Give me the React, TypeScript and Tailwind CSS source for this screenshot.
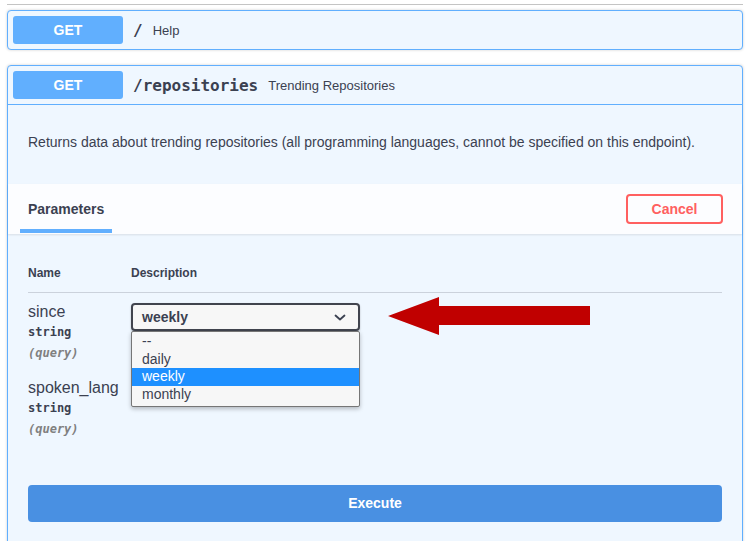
import React from "react";

const sans = "font-['Liberation_Sans',Arial,sans-serif]";
const mono = "font-['DejaVu_Sans_Mono',monospace]";

const MethodBadge = () => (
  <div className="w-[110px] h-[28px] rounded-[3px] bg-[#61affe] flex items-center justify-center text-white text-[14px] font-bold">
    GET
  </div>
);

const ParamRow = ({ name, children }: { name: string; children?: React.ReactNode }) => (
  <div className="flex h-[76px] pt-[8px]">
    <div className="w-[103px] shrink-0">
      <div className="text-[16px] leading-[21px]">{name}</div>
      <div className={`${mono} text-[12px] leading-[21px] font-bold`}>string</div>
      <div className={`${mono} text-[12px] leading-[20px] font-bold italic text-[#808080]`}>(query)</div>
    </div>
    <div className="flex-1">{children}</div>
  </div>
);

const options = ["--", "daily", "weekly", "monthly"];

export default function App() {
  return (
    <div className={`${sans} relative w-[748px] h-[541px] overflow-hidden bg-white text-[#3b4151]`}>
      <div className="ml-[7px] w-[736px] pt-[4px]">
        <div className="h-px bg-[#c4c4c4]" />

        {/* GET / */}
        <div className="mt-[5px] rounded-[4px] border border-[#61affe] bg-[#eff7ff] shadow-[0_0_3px_rgba(0,0,0,0.19)]">
          <div className="flex items-center p-[5px]">
            <MethodBadge />
            <span className={`${mono} ml-[10px] pt-[1px] text-[16px] font-bold`}>/</span>
            <span className="ml-[10px] pt-[2px] text-[13px]">Help</span>
          </div>
        </div>

        {/* GET /repositories */}
        <div className="mt-[15px] h-[600px] rounded-[4px] border border-[#61affe] bg-[#eff7ff] shadow-[0_0_3px_rgba(0,0,0,0.19)]">
          <div className="flex items-center p-[5px] border-b border-[#61affe]">
            <MethodBadge />
            <span className={`${mono} ml-[10px] pt-[2px] text-[16px] font-bold`}>/repositories</span>
            <span className="ml-[10px] pt-[2px] text-[13px]">Trending Repositories</span>
          </div>

          <div className="px-[20px] pt-[28px] pb-[32px] text-[14px] leading-[19px]">
            Returns data about trending repositories (all programming languages, cannot be specified on this endpoint).
          </div>

          <div className="h-[50px] pl-[12px] pr-[19px] flex items-start justify-between bg-[#fcfdff] shadow-[0_1px_2px_rgba(0,0,0,0.1)]">
            <div className="w-[92px] shrink-0 pl-[8px] flex flex-col">
              <div className="pt-[17px] h-[34px] text-[14px] leading-[17px] font-bold">Parameters</div>
              <div className="-ml-[8px] mt-[11px] h-[4px] bg-[#61affe]" />
            </div>
            <button className="mt-[10px] w-[97px] h-[30px] rounded-[4px] border-2 border-[#ff6060] text-[#ff6060] text-[14px] font-bold bg-transparent">
              Cancel
            </button>
          </div>

          <div className="px-[20px] pt-[20px]">
            <div className="flex py-[12px] text-[12px] leading-[14px] font-bold border-b border-[#3b4151]/20">
              <div className="w-[103px]">Name</div>
              <div>Description</div>
            </div>

            <ParamRow name="since">
              <div className="relative mt-[2px] w-[229px]">
                <div className="h-[28px] rounded-[4px] border-2 border-[#41444e] bg-[#f7f7f7] shadow-[0_1px_2px_rgba(0,0,0,0.25)] flex items-center justify-between pl-[9px] pr-[12px]">
                  <span className="text-[14px] font-bold">weekly</span>
                  <svg width="12" height="7" viewBox="0 0 12 7" fill="none">
                    <path d="M1.5 1.5 L6 5.5 L10.5 1.5" stroke="#3b4151" strokeWidth="1.8" strokeLinecap="round" strokeLinejoin="round" />
                  </svg>
                </div>
                <div className="absolute left-0 top-[28px] z-10 w-full border border-[#767676] rounded-[2px] bg-[#f7f7f7] pt-[1px] pb-[3px] shadow-[0_2px_4px_rgba(0,0,0,0.25)]">
                  {options.map((o) => (
                    <div
                      key={o}
                      className={
                        o === "weekly"
                          ? "h-[17.5px] leading-[17.5px] pl-[10px] text-[14px] bg-[#1e90ff] text-white"
                          : "h-[17.5px] leading-[17.5px] pl-[10px] text-[14px]"
                      }
                    >
                      {o}
                    </div>
                  ))}
                </div>
              </div>
            </ParamRow>
            <ParamRow name="spoken_lang" />

            <button className="mt-[40px] w-full h-[37px] rounded-[4px] bg-[#4990e2] text-white text-[14px] font-bold">
              Execute
            </button>
          </div>
        </div>
      </div>

      {/* annotation arrow */}
      <svg className="absolute left-[388px] top-[297px]" width="203" height="38" viewBox="0 0 203 38">
        <path d="M0 19 L51 0 L51 9 L202 9 L202 28 L51 28 L51 38 Z" fill="#c00000" />
      </svg>
    </div>
  );
}
